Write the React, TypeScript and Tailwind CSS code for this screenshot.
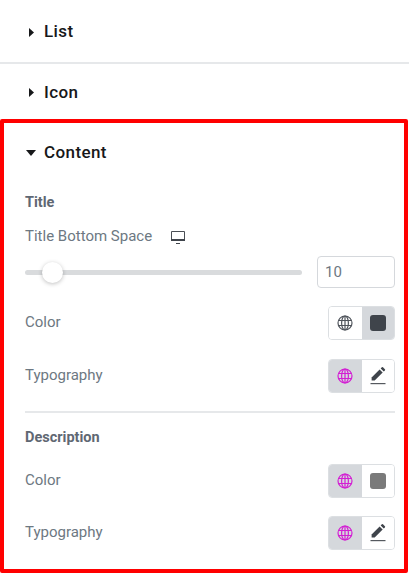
import React from "react";

const Globe = ({ color }: { color: string }) => (
  <svg width="16" height="16" viewBox="0 0 16 16" fill="none" stroke={color} strokeWidth="1.2">
    <circle cx="8" cy="8" r="7" />
    <ellipse cx="8" cy="8" rx="3.4" ry="7" />
    <path d="M8 1v14M1.500 5.500h13M1.500 10.500h13" />
  </svg>
);

const Pencil = () => (
  <svg width="16" height="18" viewBox="0 0 16 18" fill="#3f444b">
    <path d="M1.6 13.6v-3.1l8-8 3.1 3.100-8 8z" />
    <path d="M10.700 1.400 11.800.3a.9.9 0 0 1 1.200 0l1.900 1.900a.9.9 0 0 1 0 1.200l-1.100 1.100z" />
    <rect x="0.5" y="16" width="15" height="1.2" fill="#55595f" />
  </svg>
);

const Swatch = ({ color }: { color: string }) => (
  <span className="block h-[16px] w-[16px] rounded-[3px]" style={{ backgroundColor: color }} />
);

const Caret = ({ open }: { open?: boolean }) =>
  open ? (
    <svg width="10" height="6" viewBox="0 0 10 6" className="mr-[8px] ml-[1px]"><path d="M0 0h10L5 6z" fill="#17181a" /></svg>
  ) : (
    <svg width="5" height="9" viewBox="0 0 5 9" className="mr-[10px] ml-[3px]"><path d="M0 0l5 4.500-5 4.500z" fill="#17181a" /></svg>
  );

const Toggle = ({
  left,
  right,
  active,
}: {
  left: React.ReactNode;
  right: React.ReactNode;
  active: "left" | "right";
}) => (
  <div className="flex h-[34px] w-[67px] overflow-hidden rounded-[4px] border border-[#dcdfe2]">
    <div className={`flex flex-1 items-center justify-center ${active === "left" ? "bg-[#d5d8dc]" : "bg-white"}`}>{left}</div>
    <div className={`flex flex-1 items-center justify-center ${active === "right" ? "bg-[#d5d8dc]" : "bg-white"}`}>{right}</div>
  </div>
);

const Row = ({ label, children, className }: { label: string; children: React.ReactNode; className?: string }) => (
  <div className={`flex h-[34px] items-center justify-between ${className ?? ""}`}>
    <span className="mt-[-1px] text-[15px] text-[#6d7882]">{label}</span>
    {children}
  </div>
);

const magenta = "#d31fd3";
const heading = "pt-[2px] text-[17px] font-medium tracking-[0.4px] text-[#17181a]";

export default function App() {
  return (
    <div className="h-[574px] w-[409px] overflow-hidden bg-white font-['Roboto',sans-serif]">
      <div className={`flex h-[62px] items-center pl-[26px] ${heading}`}>
        <Caret />
        <span>List</span>
      </div>
      <div className="h-[2px] bg-[#e6e8ea]" />
      <div className={`flex h-[55px] items-center pl-[26px] ${heading}`}>
        <Caret />
        <span>Icon</span>
      </div>
      <div className="mr-[1px] h-[454px] rounded-[2px] border-[4px] border-[#ff0000] pl-[21px] pr-[9px]">
        <div className={`flex h-[58px] items-center ${heading}`}>
          <Caret open />
          <span>Content</span>
        </div>
        <div className="mt-[12px] text-[14.5px] leading-[20px] font-bold text-[#5f6873]">Title</div>
        <div className="mt-[13px] flex h-[20px] items-center text-[15px] text-[#6d7882]">
          <span>Title Bottom Space</span>
          <svg width="14" height="13" viewBox="0 0 14 13" className="mt-[2px] ml-[19px]" fill="none">
            <path d="M.5.5h13v9H.5z" stroke="#4a4f55" strokeWidth="1" />
            <rect x="0" y="8" width="14" height="2" fill="#3f444b" />
            <rect x="5" y="12" width="4" height="1" fill="#3f444b" />
          </svg>
        </div>
        <div className="mt-[10px] flex h-[32px] items-center">
          <div className="relative h-[5px] w-[277px] rounded-[3px] bg-[#d9dbdd]">
            <span className="absolute top-[-8px] left-[17px] h-[21px] w-[21px] rounded-full bg-white shadow-[0_1px_4px_rgba(0,0,0,0.25)]" />
          </div>
          <div className="ml-[15px] flex h-[32px] w-[78px] items-center rounded-[4px] border border-[#d5d8dc] pl-[7px] text-[15px] text-[#6d7882]">10</div>
        </div>
        <Row label="Color" className="mt-[18px]">
          <Toggle left={<Globe color="#50555c" />} right={<Swatch color="#3f444b" />} active="right" />
        </Row>
        <Row label="Typography" className="mt-[19px]">
          <Toggle left={<Globe color={magenta} />} right={<Pencil />} active="left" />
        </Row>
        <div className="mt-[18px] h-[2px] bg-[#e6e8ea]" />
        <div className="mt-[15px] text-[14.5px] leading-[20px] font-bold text-[#5f6873]">Description</div>
        <Row label="Color" className="mt-[16px]">
          <Toggle left={<Globe color={magenta} />} right={<Swatch color="#7a7a7a" />} active="left" />
        </Row>
        <Row label="Typography" className="mt-[18px]">
          <Toggle left={<Globe color={magenta} />} right={<Pencil />} active="left" />
        </Row>
      </div>
    </div>
  );
}
